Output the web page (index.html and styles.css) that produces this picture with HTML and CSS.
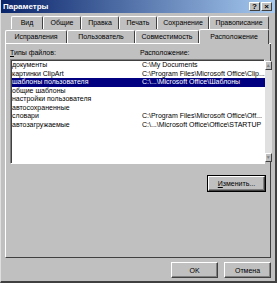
FILE: index.html
```html
<!DOCTYPE html>
<html lang="ru">
<head>
<meta charset="UTF-8">
<title>Параметры</title>
<link rel="stylesheet" href="styles.css">
</head>
<body>

<div class="window">
    <div class="titlebar">
        <span class="title">Параметры</span>
        <div class="title-buttons">
            <span class="tbtn">?</span>
            <span class="tbtn">&#215;</span>
        </div>
    </div>

    <div class="tabs">
        <div class="tab-row back">
            <span class="tab w1">Вид</span>
            <span class="tab w2">Общие</span>
            <span class="tab w3">Правка</span>
            <span class="tab w4">Печать</span>
            <span class="tab w5">Сохранение</span>
            <span class="tab w6">Правописание</span>
        </div>
        <div class="tab-row front">
            <span class="tab v1">Исправления</span>
            <span class="tab v2">Пользователь</span>
            <span class="tab v3">Совместимость</span>
            <span class="tab v4 active">Расположение</span>
        </div>
    </div>

    <div class="panel">
        <div class="labels">
            <span class="col1"><u>Т</u>ипы файлов:</span>
            <span>Расположение:</span>
        </div>
        <div class="listbox">
            <div class="rows">
                <div class="row"><span class="col1">документы</span><span>C:\My Documents</span></div>
                <div class="row"><span class="col1">картинки ClipArt</span><span>C:\Program Files\Microsoft Office\Clip...</span></div>
                <div class="row selected"><span class="col1">шаблоны пользователя</span><span>C:\...\Microsoft Office\Шаблоны</span></div>
                <div class="row"><span class="col1">общие шаблоны</span><span></span></div>
                <div class="row"><span class="col1">настройки пользователя</span><span></span></div>
                <div class="row"><span class="col1">автосохраненные</span><span></span></div>
                <div class="row"><span class="col1">словари</span><span>C:\Program Files\Microsoft Office\Off...</span></div>
                <div class="row"><span class="col1">автозагружаемые</span><span>C:\...\Microsoft Office\Office\STARTUP</span></div>
            </div>
            <div class="scrollbar">
                <span class="sbtn">&#9650;</span>
                <span class="track"></span>
                <span class="sbtn">&#9660;</span>
            </div>
        </div>
        <div class="modify">
            <button class="btn btn-modify"><u>И</u>зменить...</button>
        </div>
    </div>

    <div class="footer">
        <button class="btn">OK</button>
        <button class="btn">Отмена</button>
    </div>
</div>

</body>
</html>
```

FILE: styles.css
```css
body {
  margin: 0;
  padding: 0;
  background: #c0c0c0;
  font-family: "Liberation Sans", Arial, sans-serif;
  font-size: 7px;
  color: #000;
}

.window {
  width: 277px;
  height: 283px;
  box-sizing: border-box;
  background: #c0c0c0;
  border-right: 2px solid #404040;
  border-bottom: 2px solid #404040;
  border-left: 1px solid #dfdfdf;
  display: flex;
  flex-direction: column;
}

.titlebar {
  height: 13px;
  background: linear-gradient(90deg, #0a246a, #a6caf0);
  display: flex;
  align-items: center;
  justify-content: space-between;
  padding: 0 3px 0 2px;
}

.title {
  color: #fff;
  font-weight: bold;
  font-size: 8px;
}

.title-buttons {
  display: flex;
  gap: 1px;
}

.tbtn {
  width: 11px;
  height: 9px;
  background: #c0c0c0;
  border: 1px solid;
  border-color: #fff #404040 #404040 #fff;
  box-sizing: border-box;
  font-size: 8px;
  font-weight: bold;
  line-height: 7px;
  text-align: center;
}

.tabs {
  padding: 3px 4px 0 4px;
}

.tab-row {
  display: flex;
  height: 13px;
}

.tab-row.back {
  padding-left: 6px;
}

.tab {
  box-sizing: border-box;
  border-top: 1px solid #fff;
  border-left: 1px solid #fff;
  border-right: 1px solid #404040;
  border-radius: 2px 2px 0 0;
  text-align: center;
  line-height: 12px;
}

.w1 { width: 32px; }
.w2 { width: 38px; }
.w3 { width: 38px; }
.w4 { width: 38px; }
.w5 { width: 52px; }
.w6 { width: 60px; }

.tab-row.front {
  height: 14px;
  border-bottom: 1px solid #fff;
  align-items: flex-end;
}

.v1 { width: 62px; height: 13px; }
.v2 { width: 68px; height: 13px; }
.v3 { width: 64px; height: 13px; }
.v4 { width: 70px; }

.tab.active {
  height: 15px;
  margin-bottom: -1px;
  background: #c0c0c0;
  line-height: 13px;
}

.panel {
  flex: 1;
  margin: 0 4px;
  border-left: 1px solid #fff;
  border-right: 1px solid #404040;
  border-bottom: 1px solid #404040;
  padding: 4px 5px 0 4px;
  display: flex;
  flex-direction: column;
}

.labels {
  display: flex;
  height: 10px;
  line-height: 10px;
}

.col1 {
  width: 130px;
  flex-shrink: 0;
}

.listbox {
  margin-top: 1px;
  height: 105px;
  box-sizing: border-box;
  background: #fff;
  border: 1px solid;
  border-color: #808080 #fff #fff #808080;
  box-shadow: inset 1px 1px 0 #404040;
  display: flex;
}

.rows {
  flex: 1;
  padding-top: 1px;
  padding-left: 1px;
}

.row {
  display: flex;
  height: 8.5px;
  line-height: 8.5px;
  white-space: nowrap;
  overflow: hidden;
}

.row.selected {
  background: #000080;
  color: #fff;
}

.scrollbar {
  width: 9px;
  margin: 1px 1px 1px 0;
  background: #e0e0e0;
  display: flex;
  flex-direction: column;
}

.sbtn {
  height: 9px;
  box-sizing: border-box;
  background: #c0c0c0;
  border: 1px solid;
  border-color: #fff #404040 #404040 #fff;
  color: #808080;
  font-size: 5px;
  line-height: 7px;
  text-align: center;
}

.track {
  flex: 1;
}

.modify {
  display: flex;
  justify-content: flex-end;
  margin-top: 12px;
}

.btn {
  box-sizing: border-box;
  height: 15px;
  padding: 0;
  background: #c0c0c0;
  border: 1px solid;
  border-color: #fff #404040 #404040 #fff;
  box-shadow: inset -1px -1px 0 #808080;
  font-family: "Liberation Sans", Arial, sans-serif;
  font-size: 7px;
  color: #000;
}

.btn-modify {
  width: 57px;
  outline: 1px solid #000;
}

.footer {
  display: flex;
  justify-content: flex-end;
  gap: 6px;
  padding: 4px 4px 3px 0;
}

.footer .btn {
  width: 47px;
  height: 16px;
}
```
